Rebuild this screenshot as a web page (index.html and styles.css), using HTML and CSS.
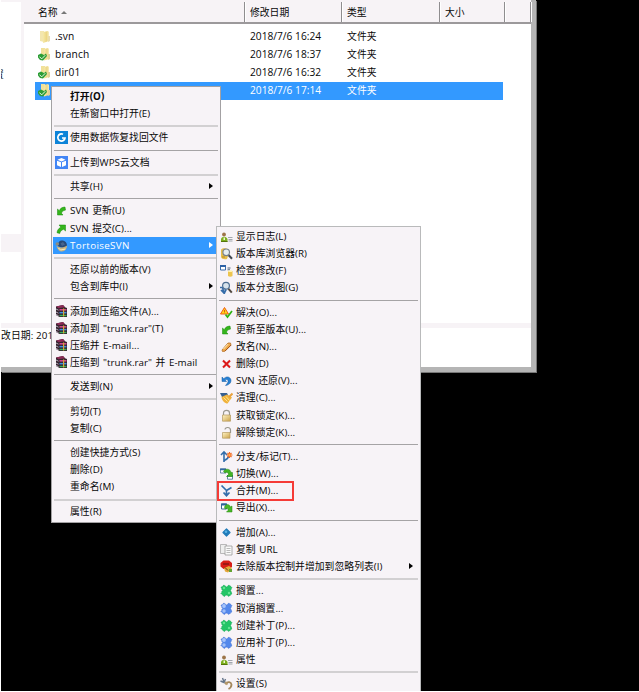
FILE: index.html
```html
<!DOCTYPE html>
<html lang="zh-CN">
<head>
<meta charset="utf-8">
<title>资源管理器</title>
<link rel="stylesheet" href="styles.css">
</head>
<body>
<svg class="defs" width="0" height="0">
  <defs>
    <linearGradient id="gold" x1="0" y1="0" x2="1" y2="0"><stop offset="0" stop-color="#f6e9a8"/><stop offset=".6" stop-color="#ecd684"/><stop offset="1" stop-color="#f8efc0"/></linearGradient>
    <linearGradient id="brass" x1="0" y1="0" x2="1" y2="1"><stop offset="0" stop-color="#fff3c4"/><stop offset="1" stop-color="#cba24a"/></linearGradient>
  </defs>
  <symbol id="folder" viewBox="0 0 13 13"><path d="M2 1h4v11l-4-1z" fill="#f3e6ae"/><path d="M5 2l5-1 1 1v9l-6 2z" fill="url(#gold)"/><path d="M10 6h2v5l-2 1z" fill="#e9dcae"/></symbol>
  <symbol id="folder-ok" viewBox="0 0 13 13"><path d="M3 0h4v10H3z" fill="#f1e19a"/><path d="M6 1l4-1 1 1v10l-5 1.500z" fill="url(#gold)"/><path d="M10 6h2v5l-2 1z" fill="#e2d295"/><path d="M0 7l3-1.500 3 1.500 2-1.500 1 2.500-4 4.500-3-.5L0 9.500z" fill="#2c9e35"/><path d="M1.500 8.800l2.300 2 3.500-3.600" fill="none" stroke="#e9f6e6" stroke-width="1"/></symbol>
  <symbol id="recover" viewBox="0 0 13 13"><path d="M0 0h13v13H0z" fill="#0d83d8"/><path d="M8 3.200A3.600 3.600 0 1 0 10 7H7" fill="none" stroke="#fff" stroke-width="1.700"/></symbol>
  <symbol id="cloud" viewBox="0 0 13 13"><path d="M0 0h13v13H0z" fill="#4285f5"/><path d="M6.500 2l4 1.700-4 1.700-4-1.700zM2 4.700l4 1.600v4.700l-4-1.800zM11 4.700L7 6.300V11l4-1.800z" fill="#fff"/></symbol>
  <symbol id="update" viewBox="0 0 13 13"><path d="M2.500 5v6H8L6.500 9.300c.4-1.800 1.700-2.800 4-3.200L10 3C7 3.200 5 4.500 4.300 6.700z" fill="#35b51c" stroke="#158a08" stroke-width=".5"/></symbol>
  <symbol id="commit" viewBox="0 0 13 13"><path d="M4 3h6.500v6L8.700 7.300C6.500 8 5.200 9.300 4.700 11.500L2 10.700c.3-2.500 1.500-4 3.800-5.700z" fill="#35b51c" stroke="#158a08" stroke-width=".5"/></symbol>
  <symbol id="tortoise" viewBox="0 0 13 13"><path d="M1.500 7c3 2 7 2 10-1l.5 2c-1 3-3 4.500-5.500 4.500S2.500 10.500 1.500 7z" fill="#c9b27e"/><path d="M3 7C2.500 3 5 1 8 1.500c2.500.5 4 2.500 4 5-3 2-6 2.500-9 .5z" fill="#284a78"/><path d="M5.500 4.500l2.500-1.500 2 2.500-3 1.500z" fill="#46658f"/><circle cx="2.300" cy="5" r="1.800" fill="#8c8c80"/><path d="M3.500 9l2 2 5-1" stroke="#f5edc5" fill="none"/></symbol>
  <symbol id="rar" viewBox="0 0 13 13"><path d="M1 1.500l7-1.500 2 2.200 2 .8v9H4.500L1 10z" fill="#33222e"/><path d="M1 1.500l7-1.500 2 2.200-6.500 1z" fill="#8c2a55"/><path d="M4.500 4h7v1.600h-7z" fill="#d0478a"/><path d="M4.500 6.900h7v1.500h-7z" fill="#3d8ee0"/><path d="M4.500 9.800h7v1.400h-7z" fill="#36b158"/><path d="M1 4l2.500 1.200M1 7l2.500 1.200M1 9.500l2.500 1.200" stroke="#b7aebb"/><path d="M8 3.500h1.200v8H8z" fill="#d5a63a"/></symbol>
  <symbol id="log" viewBox="0 0 13 13"><circle cx="4" cy="4.500" r="1.900" fill="#9d7448"/><path d="M1 12V9c1-3 5-3 6.500 0v3z" fill="#7cae1d"/><path d="M3.500 7.500H5V10H3.500z" fill="#eef5d0"/><path d="M1 11.500h6.500" stroke="#55740d"/><path d="M8 7.500h4.500M8.500 9.500h4M8.500 11h4" stroke="#8b929a" stroke-width=".8"/></symbol>
  <symbol id="browse" viewBox="0 0 13 13"><path d="M1 3c0-2 5-2 6-1l2 4-2 6c-3 .5-5.500 0-6-2z" fill="#e6bd48"/><circle cx="6.200" cy="5.300" r="3.300" fill="#e4edf0" stroke="#77828b" stroke-width="1.200"/><path d="M8.700 8.200l3.300 3.600" stroke="#3f4650" stroke-width="2"/><path d="M2 10h3" stroke="#b28929"/></symbol>
  <symbol id="modify" viewBox="0 0 13 13"><path d="M.5 1.500h5v4.500h-5z" fill="#fff" stroke="#386caa"/><path d="M0 1h6v2H0z" fill="#2d62a6"/><path d="M7.500 4h3M7.500 5.800h2.500" stroke="#4a6179"/><path d="M8 7h4.500v5c-1 1-3.500 1-4.500 0z" fill="#edc54f"/><ellipse cx="10.200" cy="7.200" rx="2.200" ry=".9" fill="#fff2b0"/></symbol>
  <symbol id="graph" viewBox="0 0 13 13"><path d="M0 6.500h2.500L4 12 1 9" fill="none" stroke="#376da9" stroke-width="1.700"/><circle cx="6" cy="4.800" r="3.400" fill="#d7e3ec" stroke="#4d6e92" stroke-width="1.200"/><path d="M6 8.500l-2 4" stroke="#376da9" stroke-width="1.800"/><path d="M8.500 7.800l3.300 3.800" stroke="#4f473f" stroke-width="2"/></symbol>
  <symbol id="resolve" viewBox="0 0 13 13"><path d="M4.500 1.500L8.500 8H.5z" fill="#ffd615" stroke="#ee5b16"/><path d="M4.500 4v2.500" stroke="#d54f10" stroke-width=".9"/><path d="M5.500 8.500l2 2.500L12 5" fill="none" stroke="#2eb312" stroke-width="1.700"/></symbol>
  <symbol id="rename" viewBox="0 0 13 13"><path d="M2 10L8 3l2.500 0 .5 2.200-6 6-2.500.3z" fill="#f0a94b" stroke="#b5702b" stroke-width=".8"/><path d="M3.500 9L8 4.200" stroke="#fff1c2" stroke-width="1"/><path d="M5 11l6-6" stroke="#a0521b" stroke-width=".9"/></symbol>
  <symbol id="delete" viewBox="0 0 13 13"><path d="M3 3.500l7 7M10 3.500l-7 7" stroke="#dc1919" stroke-width="2.100"/></symbol>
  <symbol id="revert" viewBox="0 0 13 13"><path d="M2 3v4.500h4.500L5 6c2.500-1.200 4 .5 2.500 3l-2 2.500C10 11 12 7.500 10.500 4.800 9 2.300 6 2.300 3.800 4.700z" fill="#277fd2" stroke="#155ca5" stroke-width=".5"/></symbol>
  <symbol id="clean" viewBox="0 0 13 13"><path d="M0 2h7l2 4-6 2z" fill="#375f91"/><path d="M1.500 6l5.500-2.500 5 3-4.500 6C5 12.500 2 10 1.500 6z" fill="#f0b23c"/><path d="M3.500 6.500l4 4M6 5.500l3.500 4" stroke="#fff0a2" stroke-width=".8"/><path d="M9 6l3.500-3.500" stroke="#e8a13c" stroke-width="2"/></symbol>
  <symbol id="lock" viewBox="0 0 13 13"><path d="M3.500 7V4c0-3.500 6-3.500 6 0v3" fill="none" stroke="#9a988f" stroke-width="1.200"/><path d="M2.500 6h8v6.200h-8z" fill="url(#brass)" stroke="#b59a60" stroke-width=".7"/></symbol>
  <symbol id="unlock" viewBox="0 0 13 13"><path d="M5 3.500c0-3 5.500-2.500 5.500.5v3" fill="none" stroke="#9a988f" stroke-width="1.200"/><path d="M2.500 6.500h7.500v5.700H2.500z" fill="url(#brass)" stroke="#b59a60" stroke-width=".7"/></symbol>
  <symbol id="branch" viewBox="0 0 13 13"><path d="M4 12V2.500M1 5l3-3.200L7 5" fill="none" stroke="#326daa" stroke-width="1.600"/><path d="M4 10.500c2.500-.7 4-2 4.500-4" fill="none" stroke="#326daa" stroke-width="1.500"/><path d="M9.500 2v6M6.500 5h6M7.500 3l4 4M11.500 3l-4 4" stroke="#f16422" stroke-width="1.100"/><circle cx="9.500" cy="5" r="1.200" fill="#ffb04a"/></symbol>
  <symbol id="switch" viewBox="0 0 13 13"><path d="M.4 2h5.600v4H.4zM7.500 8.500h5v3.700h-5z" fill="#fff" stroke="#3d6b90" stroke-width=".8"/><path d="M0 1.500h6v1.700H0zM7 8h6v1.600H7z" fill="#3268a0"/><path d="M3.500 4.500C5 1 10.500 1.500 11 5.500h1.500V9.500H6.500l2-2C8 5 6.500 4.500 5 6z" fill="#42b424" stroke="#20860e" stroke-width=".5"/></symbol>
  <symbol id="merge" viewBox="0 0 13 13"><path d="M1.500 1.500l5 5V11M11.500 3.500L6.500 6.500M3.500 8.500l3 3.200 3-3.200" fill="none" stroke="#326daa" stroke-width="1.700"/></symbol>
  <symbol id="export" viewBox="0 0 13 13"><path d="M1.500 3h5v5h-5z" fill="#fff" stroke="#3b6d91"/><path d="M1 2.500h6v2H1z" fill="#2e639c"/><path d="M4.500 6C6 2.500 9.500 3 10.500 6L12 5v6H6.500l1.700-1.700C8 7.500 7 6.500 5 8z" fill="#49b629" stroke="#24890f" stroke-width=".5"/></symbol>
  <symbol id="add" viewBox="0 0 13 13"><path d="M6.500 3l3.500 3.500L6.500 10 3 6.500z" fill="#217bb9" stroke="#217bb9" stroke-width="1.200" stroke-linejoin="round"/><circle cx="6" cy="5.800" r="1.300" fill="#58b4e6"/></symbol>
  <symbol id="copy" viewBox="0 0 13 13"><path d="M.5 1.500h6v9h-6z" fill="#eee" stroke="#aaa" stroke-width=".8"/><path d="M5 3h7v9H5z" fill="#fafafa" stroke="#999" stroke-width=".8"/><path d="M6.500 5.500h4M6.500 7.500h4M6.500 9.500h4" stroke="#aaa" stroke-width=".8"/></symbol>
  <symbol id="unversion" viewBox="0 0 13 13"><path d="M3.500 .5h5.500L12 3v4L9 9H3.500L.5 6.500V3z" fill="#d91e18"/><path d="M3 4h6" stroke="#7c1713" stroke-width="1.300"/><path d="M4 8l5-2 3 2-4 4.500-3-1z" fill="#e4a739"/><path d="M9 9h3v3H9z" fill="#63a332"/><path d="M5 7.500l3 3" stroke="#4a3316" stroke-width=".9"/></symbol>
  <symbol id="green-patch" viewBox="0 0 13 13"><path d="M1 3.500l3-2.500 2.500 2L9 1l3 2.500-1.500 3L12 9.500l-3 3-2.500-1.500-2.500 1.500-3-3 1.500-3z" fill="#24c567" stroke="#16a350" stroke-width=".7" stroke-dasharray="1.500 .8"/><circle cx="4" cy="4" r="1.200" fill="#65e493"/><circle cx="9" cy="9" r="1.200" fill="#65e493"/></symbol>
  <symbol id="blue-patch" viewBox="0 0 13 13"><path d="M1 3.500l3-2.500 2.500 2L9 1l3 2.500-1.500 3L12 9.500l-3 3-2.500-1.500-2.500 1.500-3-3 1.500-3z" fill="#5488eb" stroke="#4571d0" stroke-width=".7" stroke-dasharray="1.500 .8"/><circle cx="4" cy="4" r="1.900" fill="#a7c4fa"/><circle cx="4" cy="9" r="1.700" fill="#a0bff8"/></symbol>
  <symbol id="settings" viewBox="0 0 13 13"><path d="M5 7c3-3 6-2 6.500.5 0 2-1 3.500-3 4.500" fill="none" stroke="#a4875b" stroke-width="1.800"/><path d="M5 5l2.500 2.500" stroke="#b69a6c" stroke-width="2"/><path d="M.5 4L4 5.500 5.500 2M2.500 1l1.500 4" fill="none" stroke="#65758a" stroke-width="1.400"/></symbol>
</svg>

<div class="screen">
  <main class="window">
    <aside class="tree"><span class="tree-label">置</span><span class="tree-row"></span></aside>
    <section class="list">
      <div class="grid head">
        <span>名称 <i class="sort"></i></span><span>修改日期</span><span>类型</span><span>大小</span><span></span>
      </div>
      <div class="rows">
        <div class="grid file"><span><svg><use href="#folder"/></svg><b>.svn</b></span><span class="date">2018/7/6 16:24</span><span class="kind">文件夹</span></div>
        <div class="grid file"><span><svg><use href="#folder-ok"/></svg><b>branch</b></span><span class="date">2018/7/6 18:37</span><span class="kind">文件夹</span></div>
        <div class="grid file"><span><svg><use href="#folder-ok"/></svg><b>dir01</b></span><span class="date">2018/7/6 16:32</span><span class="kind">文件夹</span></div>
        <div class="grid file selected"><span><svg><use href="#folder-ok"/></svg></span><span class="date">2018/7/6 17:14</span><span class="kind">文件夹</span></div>
      </div>
    </section>
    <footer class="status">改日期: 201</footer>
  </main>

  <ul class="menu context">
    <li class="default">打开(O)</li>
    <li>在新窗口中打开(E)</li>
    <li class="sep soft"></li>
    <li><svg><use href="#recover"/></svg>使用数据恢复找回文件</li>
    <li class="sep"></li>
    <li><svg><use href="#cloud"/></svg>上传到WPS云文档</li>
    <li class="sep soft"></li>
    <li class="more">共享(H)</li>
    <li class="sep"></li>
    <li><svg><use href="#update"/></svg>SVN 更新(U)</li>
    <li><svg><use href="#commit"/></svg>SVN 提交(C)...</li>
    <li class="more active"><svg><use href="#tortoise"/></svg>TortoiseSVN</li>
    <li class="sep soft"></li>
    <li>还原以前的版本(V)</li>
    <li class="more">包含到库中(I)</li>
    <li class="sep"></li>
    <li><svg><use href="#rar"/></svg>添加到压缩文件(A)...</li>
    <li><svg><use href="#rar"/></svg>添加到 "trunk.rar"(T)</li>
    <li><svg><use href="#rar"/></svg>压缩并 E-mail...</li>
    <li><svg><use href="#rar"/></svg>压缩到 "trunk.rar" 并 E-mail</li>
    <li class="sep"></li>
    <li class="more">发送到(N)</li>
    <li class="sep soft"></li>
    <li>剪切(T)</li>
    <li>复制(C)</li>
    <li class="sep"></li>
    <li>创建快捷方式(S)</li>
    <li>删除(D)</li>
    <li>重命名(M)</li>
    <li class="sep soft"></li>
    <li>属性(R)</li>
  </ul>

  <ul class="menu svn">
    <li><svg><use href="#log"/></svg>显示日志(L)</li>
    <li><svg><use href="#browse"/></svg>版本库浏览器(R)</li>
    <li><svg><use href="#modify"/></svg>检查修改(F)</li>
    <li><svg><use href="#graph"/></svg>版本分支图(G)</li>
    <li class="sep"></li>
    <li><svg><use href="#resolve"/></svg>解决(O)...</li>
    <li><svg><use href="#update"/></svg>更新至版本(U)...</li>
    <li><svg><use href="#rename"/></svg>改名(N)...</li>
    <li><svg><use href="#delete"/></svg>删除(D)</li>
    <li><svg><use href="#revert"/></svg>SVN 还原(V)...</li>
    <li><svg><use href="#clean"/></svg>清理(C)...</li>
    <li><svg><use href="#lock"/></svg>获取锁定(K)...</li>
    <li><svg><use href="#unlock"/></svg>解除锁定(K)...</li>
    <li class="sep"></li>
    <li><svg><use href="#branch"/></svg>分支/标记(T)...</li>
    <li><svg><use href="#switch"/></svg>切换(W)...</li>
    <li class="marked"><svg><use href="#merge"/></svg>合并(M)...</li>
    <li><svg><use href="#export"/></svg>导出(X)...</li>
    <li class="sep"></li>
    <li><svg><use href="#add"/></svg>增加(A)...</li>
    <li><svg><use href="#copy"/></svg>复制 URL</li>
    <li class="more"><svg><use href="#unversion"/></svg>去除版本控制并增加到忽略列表(I)</li>
    <li class="sep soft"></li>
    <li><svg><use href="#green-patch"/></svg>搁置...</li>
    <li><svg><use href="#blue-patch"/></svg>取消搁置...</li>
    <li><svg><use href="#green-patch"/></svg>创建补丁(P)...</li>
    <li><svg><use href="#blue-patch"/></svg>应用补丁(P)...</li>
    <li><svg><use href="#log"/></svg>属性</li>
    <li class="sep soft"></li>
    <li><svg><use href="#settings"/></svg>设置(S)</li>
  </ul>
</div>
</body>
</html>
```
FILE: styles.css
```css
*, ::before, ::after { box-sizing: border-box; }
body { margin: 0; background: #fff; overflow: hidden; }
.defs { position: absolute; }
.screen {
  position: relative;
  width: 638px;
  height: 691px;
  margin-left: 1px;
  overflow: hidden;
  background: #000;
  color: #080808;
  font: 9.8px/17px "Open Sans", "Noto Sans CJK SC", sans-serif;
  white-space: nowrap;
}

.window {
  width: 535px;
  height: 372px;
  display: grid;
  grid-template: 323px 44px / 23px 507px;
  background: #fff;
  border-right: 5px solid #b5b5b5;
  border-bottom: 5px solid #b5b5b5;
  box-shadow: 1px 1px #777;
}
.tree { border-right: 3px solid #f7f3f6; border-top: 2px solid #f7f3f6; overflow: hidden; }
.tree-label { display: block; margin: 64px 0 0 -7px; }
.tree-row { display: block; height: 18px; margin-top: 151px; background: #f7f3f6; }
.grid { display: grid; grid-template-columns: 221px 97px 98px 65px 26px; }
.head { height: 24px; background: #f7f3f6; border-bottom: 2px solid #9c999b; }
.head > span { border-right: 1px solid #8f8d8f; box-shadow: 1px 0 #fff; margin-top: 2px; padding: 2px 0 0 5px; }
.head > span:first-child { padding-left: 14px; }
.sort { display: inline-block; margin: 0 0 2px 1px; border: 3px solid transparent; border-top: 0; border-bottom-color: #777; }
.rows { padding-top: 4px; }
.file { width: 468px; height: 18px; margin-left: 11px; grid-template-columns: 215px 97px 1fr; line-height: 16px; }
.file span { display: flex; align-items: flex-start; }
.file svg { width: 13px; height: 13px; margin: 2px 4px 0 3px; }
.file b { font-weight: 400; font-size: 10.2px; letter-spacing: .15px; }
.date { font-size: 10.2px; }
.file .kind { padding-top: 1px; letter-spacing: .1px; }
.selected { background: #3399ff; color: #fff; }
.status { grid-column: 1 / 3; border-top: 5px solid #f7f3f6; line-height: 15px; letter-spacing: .1px; }

.menu {
  position: absolute;
  margin: 0;
  padding: 1px;
  list-style: none;
  letter-spacing: .05px;
  word-spacing: .9px;
  background: #f7f3f7;
  border: 1px solid #a3a1a3;
}
.context { left: 50px; top: 86px; width: 170px; height: 437px; }
.svn { left: 215px; top: 226px; width: 205px; height: 480px; border-color: #b9babb; }
.menu li { position: relative; height: 17.15px; line-height: 17px; padding-left: 17px; }
.svn li { padding-left: 18px; }
.menu svg { position: absolute; left: 2px; top: 2px; width: 13px; height: 13px; }
.menu .sep { height: 7.2px; padding: 3px 1px 0; }
.sep::after { content: ""; display: block; height: 1px; background: #a5a3a5; }
.soft::after { height: 2px; background: #d2d0d2; }
.more::after {
  content: "";
  position: absolute;
  right: 6px;
  top: 5px;
  border: 3.500px solid transparent;
  border-left: 4px solid #000;
  border-right: 0;
}
.default { font-weight: 700; }
.menu .active { background: #3399ff; color: #fff; letter-spacing: .35px; }
.more.active::after { border-left-color: #fff; }
.marked::before { content: ""; position: absolute; left: -1px; top: -1px; width: 77px; height: 20px; border: 2px solid #f53b37; }
```
